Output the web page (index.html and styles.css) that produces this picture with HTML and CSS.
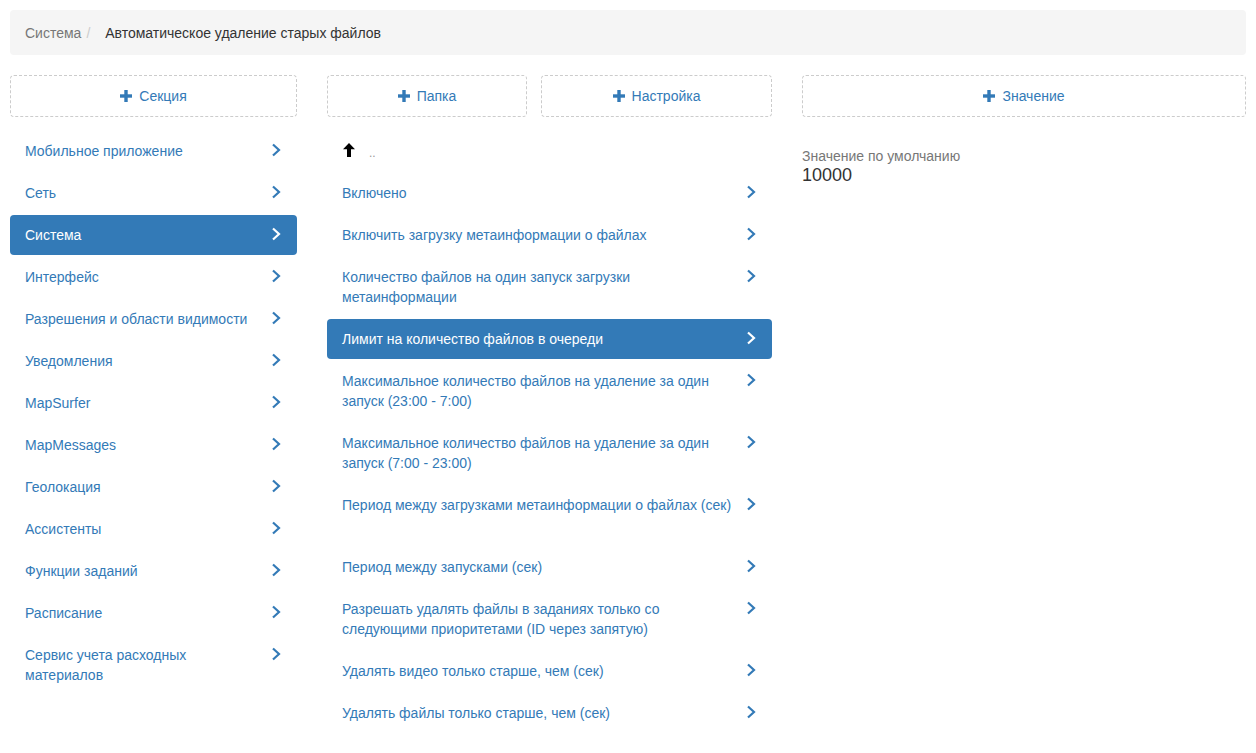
FILE: index.html
```html
<!DOCTYPE html>
<html lang="ru">
<head>
    <meta charset="UTF-8">
    <title>Настройки</title>
    <link rel="stylesheet" href="styles.css">
</head>
<body>

    <!-- Хлебные крошки -->
    <ol class="breadcrumb">
        <li><a href="#">Система</a></li>
        <li class="active">Автоматическое удаление старых файлов</li>
    </ol>

    <div class="columns">

        <!-- Секции -->
        <div class="col col-left">
            <div class="actions">
                <a href="#" class="add-btn"><svg class="plus" viewBox="0 0 12 12"><rect x="4.3" y="0" width="3.4" height="12"/><rect x="0" y="4.3" width="12" height="3.4"/></svg>Секция</a>
            </div>
            <ul class="nav-list">
                <li><a href="#"><span class="label">Мобильное приложение</span><svg class="chevron" viewBox="0 0 12 14"><polyline points="3,1.5 9,7 3,12.5"/></svg></a></li>
                <li><a href="#"><span class="label">Сеть</span><svg class="chevron" viewBox="0 0 12 14"><polyline points="3,1.5 9,7 3,12.5"/></svg></a></li>
                <li class="active"><a href="#"><span class="label">Система</span><svg class="chevron" viewBox="0 0 12 14"><polyline points="3,1.5 9,7 3,12.5"/></svg></a></li>
                <li><a href="#"><span class="label">Интерфейс</span><svg class="chevron" viewBox="0 0 12 14"><polyline points="3,1.5 9,7 3,12.5"/></svg></a></li>
                <li><a href="#"><span class="label">Разрешения и области видимости</span><svg class="chevron" viewBox="0 0 12 14"><polyline points="3,1.5 9,7 3,12.5"/></svg></a></li>
                <li><a href="#"><span class="label">Уведомления</span><svg class="chevron" viewBox="0 0 12 14"><polyline points="3,1.5 9,7 3,12.5"/></svg></a></li>
                <li><a href="#"><span class="label">MapSurfer</span><svg class="chevron" viewBox="0 0 12 14"><polyline points="3,1.5 9,7 3,12.5"/></svg></a></li>
                <li><a href="#"><span class="label">MapMessages</span><svg class="chevron" viewBox="0 0 12 14"><polyline points="3,1.5 9,7 3,12.5"/></svg></a></li>
                <li><a href="#"><span class="label">Геолокация</span><svg class="chevron" viewBox="0 0 12 14"><polyline points="3,1.5 9,7 3,12.5"/></svg></a></li>
                <li><a href="#"><span class="label">Ассистенты</span><svg class="chevron" viewBox="0 0 12 14"><polyline points="3,1.5 9,7 3,12.5"/></svg></a></li>
                <li><a href="#"><span class="label">Функции заданий</span><svg class="chevron" viewBox="0 0 12 14"><polyline points="3,1.5 9,7 3,12.5"/></svg></a></li>
                <li><a href="#"><span class="label">Расписание</span><svg class="chevron" viewBox="0 0 12 14"><polyline points="3,1.5 9,7 3,12.5"/></svg></a></li>
                <li><a href="#"><span class="label">Сервис учета расходных материалов</span><svg class="chevron" viewBox="0 0 12 14"><polyline points="3,1.5 9,7 3,12.5"/></svg></a></li>
            </ul>
        </div>

        <!-- Настройки -->
        <div class="col col-middle">
            <div class="actions">
                <a href="#" class="add-btn btn-folder"><svg class="plus" viewBox="0 0 12 12"><rect x="4.3" y="0" width="3.4" height="12"/><rect x="0" y="4.3" width="12" height="3.4"/></svg>Папка</a>
                <a href="#" class="add-btn btn-setting"><svg class="plus" viewBox="0 0 12 12"><rect x="4.3" y="0" width="3.4" height="12"/><rect x="0" y="4.3" width="12" height="3.4"/></svg>Настройка</a>
            </div>
            <ul class="nav-list">
                <li class="up"><a href="#"><svg class="arrow-up" viewBox="0 0 12 14"><path d="M6 0 L12 6.2 L8 6.2 L8 14 L4 14 L4 6.2 L0 6.2 Z"/></svg><span class="dots">..</span></a></li>
                <li><a href="#"><span class="label">Включено</span><svg class="chevron" viewBox="0 0 12 14"><polyline points="3,1.5 9,7 3,12.5"/></svg></a></li>
                <li><a href="#"><span class="label">Включить загрузку метаинформации о файлах</span><svg class="chevron" viewBox="0 0 12 14"><polyline points="3,1.5 9,7 3,12.5"/></svg></a></li>
                <li><a href="#"><span class="label">Количество файлов на один запуск загрузки метаинформации</span><svg class="chevron" viewBox="0 0 12 14"><polyline points="3,1.5 9,7 3,12.5"/></svg></a></li>
                <li class="active"><a href="#"><span class="label">Лимит на количество файлов в очереди</span><svg class="chevron" viewBox="0 0 12 14"><polyline points="3,1.5 9,7 3,12.5"/></svg></a></li>
                <li><a href="#"><span class="label">Максимальное количество файлов на удаление за один запуск (23:00 - 7:00)</span><svg class="chevron" viewBox="0 0 12 14"><polyline points="3,1.5 9,7 3,12.5"/></svg></a></li>
                <li><a href="#"><span class="label">Максимальное количество файлов на удаление за один запуск (7:00 - 23:00)</span><svg class="chevron" viewBox="0 0 12 14"><polyline points="3,1.5 9,7 3,12.5"/></svg></a></li>
                <li class="tall"><a href="#"><span class="label">Период между загрузками метаинформации о файлах (сек)</span><svg class="chevron" viewBox="0 0 12 14"><polyline points="3,1.5 9,7 3,12.5"/></svg></a></li>
                <li><a href="#"><span class="label">Период между запусками (сек)</span><svg class="chevron" viewBox="0 0 12 14"><polyline points="3,1.5 9,7 3,12.5"/></svg></a></li>
                <li><a href="#"><span class="label">Разрешать удалять файлы в заданиях только со следующими приоритетами (ID через запятую)</span><svg class="chevron" viewBox="0 0 12 14"><polyline points="3,1.5 9,7 3,12.5"/></svg></a></li>
                <li><a href="#"><span class="label">Удалять видео только старше, чем (сек)</span><svg class="chevron" viewBox="0 0 12 14"><polyline points="3,1.5 9,7 3,12.5"/></svg></a></li>
                <li><a href="#"><span class="label">Удалять файлы только старше, чем (сек)</span><svg class="chevron" viewBox="0 0 12 14"><polyline points="3,1.5 9,7 3,12.5"/></svg></a></li>
            </ul>
        </div>

        <!-- Значения -->
        <div class="col col-right">
            <div class="actions">
                <a href="#" class="add-btn"><svg class="plus" viewBox="0 0 12 12"><rect x="4.3" y="0" width="3.4" height="12"/><rect x="0" y="4.3" width="12" height="3.4"/></svg>Значение</a>
            </div>
            <div class="value-block">
                <div class="value-label">Значение по умолчанию</div>
                <div class="value">10000</div>
            </div>
        </div>

    </div>

</body>
</html>
```

FILE: styles.css
```css
/* Общие стили */
* {
    box-sizing: border-box;
}

body {
    margin: 0;
    padding: 10px;
    font-family: "Liberation Sans", Arial, sans-serif;
    font-size: 14px;
    line-height: 20px;
    color: #333;
    background: #fff;
}

a {
    color: #337ab7;
    text-decoration: none;
}

/* Хлебные крошки */
.breadcrumb {
    list-style: none;
    margin: 0 0 20px 0;
    padding: 13px 15px 12px;
    background-color: #f5f5f5;
    border-radius: 4px;
    display: flex;
}

.breadcrumb li a {
    color: #777;
}

.breadcrumb li + li:before {
    content: "/\00a0";
    padding: 0 11px 0 5px;
    color: #ccc;
}

.breadcrumb .active {
    color: #333;
}

/* Колонки */
.columns {
    display: flex;
    gap: 30px;
    align-items: flex-start;
}

.col-left {
    width: 287px;
}

.col-middle {
    width: 445px;
}

.col-right {
    flex: 1;
}

/* Кнопки добавления */
.actions {
    display: flex;
    gap: 14px;
    margin-bottom: 14px;
}

.add-btn {
    flex: 1;
    display: flex;
    align-items: center;
    justify-content: center;
    gap: 7px;
    height: 42px;
    border: 1px dashed #ccc;
    border-radius: 4px;
    color: #337ab7;
}

.btn-folder {
    flex: 0 0 200px;
}

.plus {
    width: 12px;
    height: 12px;
    fill: #337ab7;
}

/* Списки */
.nav-list {
    list-style: none;
    margin: 0;
    padding: 0;
}

.nav-list li + li {
    margin-top: 2px;
}

.nav-list li a {
    display: flex;
    align-items: flex-start;
    gap: 4px;
    padding: 10px 15px;
    border-radius: 4px;
    color: #337ab7;
}

.nav-list .label {
    flex: 1;
}

.nav-list li.tall .label {
    min-height: 40px;
}

.chevron {
    flex: 0 0 12px;
    width: 12px;
    height: 14px;
    margin-top: 2px;
    fill: none;
    stroke: #337ab7;
    stroke-width: 2.2;
}

.nav-list li.active a {
    background-color: #337ab7;
    color: #fff;
}

.nav-list li.active .chevron {
    stroke: #fff;
}

/* Строка "наверх" */
.nav-list li.up a {
    align-items: center;
    height: 40px;
    gap: 14px;
    padding-left: 16px;
}

.arrow-up {
    width: 12px;
    height: 14px;
    margin-top: -2px;
    fill: #000;
}

.dots {
    color: #999;
    font-size: 12px;
    line-height: 20px;
    padding-top: 4px;
}

/* Значение */
.value-block {
    padding-top: 15px;
}

.value-label {
    color: #777;
}

.value {
    font-size: 18px;
    line-height: 18px;
    color: #333;
}
```
